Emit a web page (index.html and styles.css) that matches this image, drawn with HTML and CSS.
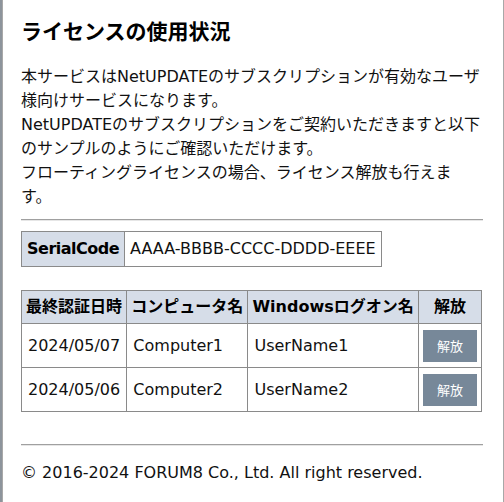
FILE: index.html
```html
<!DOCTYPE html>
<html lang="ja">
<head>
    <meta charset="UTF-8">
    <meta name="viewport" content="width=device-width, initial-scale=1.0">
    <title>ライセンスの使用状況</title>
    <link rel="stylesheet" href="styles.css">
</head>
<body>
    <div class="dialog">
        <h2>ライセンスの使用状況</h2>
        <p class="intro">
            本サービスはNetUPDATEのサブスクリプションが有効なユーザ様向けサービスになります。<br>
            NetUPDATEのサブスクリプションをご契約いただきますと以下のサンプルのようにご確認いただけます。<br>
            フローティングライセンスの場合、ライセンス解放も行えま<br>す。
        </p>
        <hr>

        <table class="serial">
            <tr>
                <th>SerialCode</th>
                <td>AAAA-BBBB-CCCC-DDDD-EEEE</td>
            </tr>
        </table>

        <table class="usage">
            <thead>
                <tr>
                    <th>最終認証日時</th>
                    <th>コンピュータ名</th>
                    <th>Windowsログオン名</th>
                    <th class="col-release">解放</th>
                </tr>
            </thead>
            <tbody>
                <tr>
                    <td>2024/05/07</td>
                    <td>Computer1</td>
                    <td>UserName1</td>
                    <td class="col-release"><button class="release-btn">解放</button></td>
                </tr>
                <tr>
                    <td>2024/05/06</td>
                    <td>Computer2</td>
                    <td>UserName2</td>
                    <td class="col-release"><button class="release-btn">解放</button></td>
                </tr>
            </tbody>
        </table>

        <footer>
            <hr>
            <p>&copy; 2016-2024 FORUM8 Co., Ltd. All right reserved.</p>
        </footer>
    </div>
</body>
</html>
```

FILE: styles.css
```css
html, body {
    height: 100%;
}
body {
    margin: 0;
    background-color: #8d949c;
    font-family: "DejaVu Sans", "Noto Sans CJK JP", sans-serif;
    font-size: 16px;
    line-height: 24px;
    color: #111;
}
.dialog {
    box-sizing: border-box;
    margin-left: 2px;
    width: 502px;
    min-height: 100%;
    background-color: #fff;
    border-left: 1px solid #a8a8a8;
    border-right: 1px solid #a8a8a8;
    padding: 16px 20px 20px 18px;
}
h2 {
    margin: 0;
    font-size: 21px;
    line-height: 32px;
    font-weight: bold;
    color: #000;
}
.intro {
    margin: 17px 0 0;
}
hr {
    border: none;
    border-top: 1px solid #a0a0a0;
    border-bottom: 1px solid #e6e6e6;
    margin: 10px 0;
}
table {
    border-collapse: collapse;
}
th, td {
    border: 1px solid #8a8a8a;
    padding: 5px 5px;
    white-space: nowrap;
    text-align: left;
}
th {
    background-color: #d6dde8;
    font-weight: bold;
    color: #000;
}
.serial {
    margin-top: 9px;
}
.serial th {
    letter-spacing: -0.5px;
}
.usage {
    margin-top: 23px;
    width: 461px;
}
.usage thead th {
    padding: 4px 4px;
}
.usage tbody td {
    height: 33px;
    padding: 5px 6px;
}
.col-release {
    text-align: center;
}
.usage tbody td.col-release {
    padding: 4px 4px;
}
.release-btn {
    border: none;
    background-color: #778899;
    color: #fff;
    font-family: "Noto Sans CJK JP", sans-serif;
    font-size: 13px;
    width: 54px;
    height: 32px;
    padding: 0;
    cursor: pointer;
}
footer hr {
    margin-top: 32px;
}
footer p {
    margin: 15px 0 0;
}
```
